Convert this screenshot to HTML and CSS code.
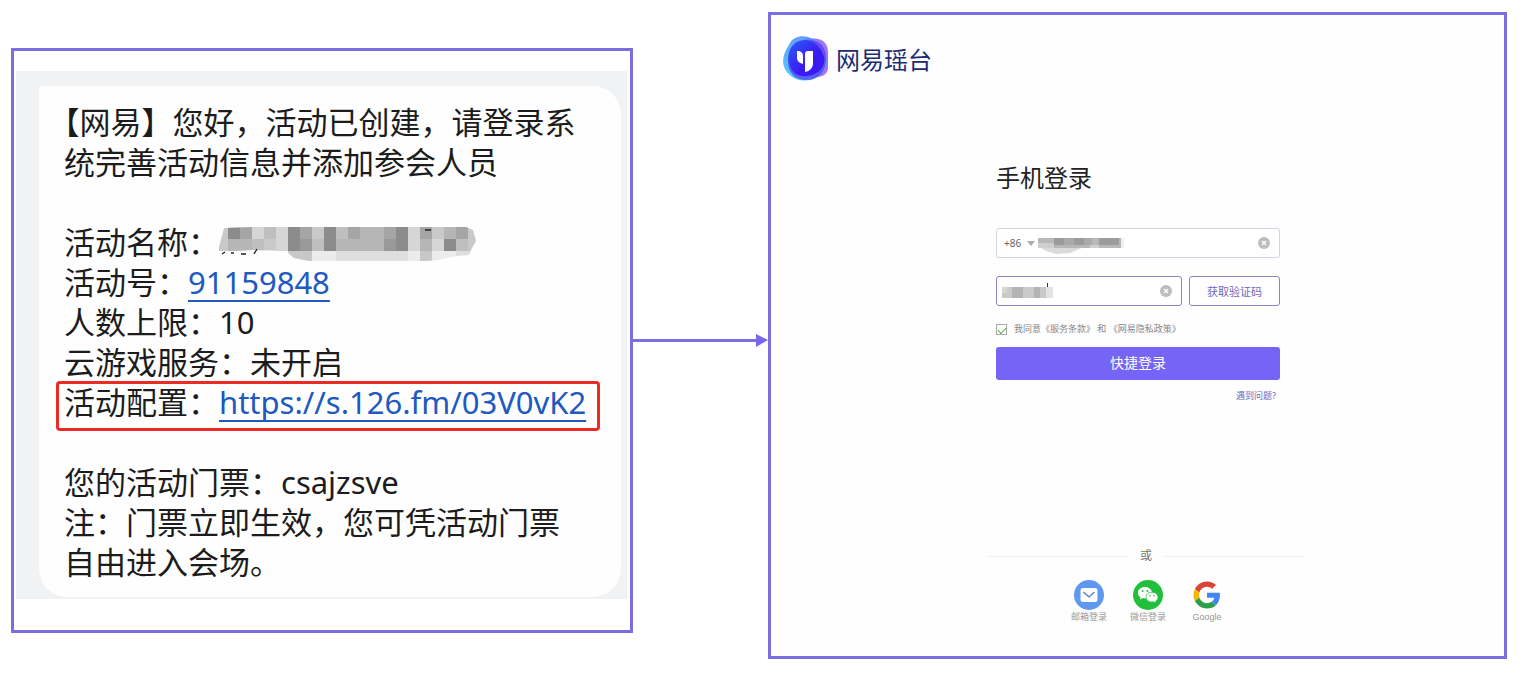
FILE: index.html
```html
<!DOCTYPE html>
<html lang="zh-CN">
<head>
<meta charset="utf-8">
<title>网易瑶台 手机登录</title>
<link rel="stylesheet" href="styles.css">
</head>
<body>
<main class="flow">
  <div class="source">
    <section class="panel sms-panel">
      <div class="sms-screen">
        <article class="bubble">
          <p>【网易】您好，活动已创建，请登录系<br>统完善活动信息并添加参会人员</p>
          <div class="details">
            <p class="with-mask">活动名称：
              <svg class="name-mask" width="257" height="40" viewBox="219 223 257 40" aria-hidden="true">
                <clipPath id="nm"><path d="M224 229l34-1h208l7 3 3 11-4 7-3 7-14 1-18 4-12 1H310l-16-3-8-7-34-1-20 1-14 2 1-6z"/></clipPath>
                <g clip-path="url(#nm)" shape-rendering="crispEdges">
                  <path fill="#c9c9c9" d="M216 227h260v25H216z"/>
                  <path fill="#dedede" d="M288 252h188v12H288z"/>
                  <path fill="#8c8c8c" d="M228 228h12v12h-12zM288 228h12v24h-12zM324 228h12v24h-12zM396 228h12v24h-12zM444 240h12v12h-12z"/>
                  <path fill="#a5a5a5" d="M240 228h12v12h-12zM300 228h12v12h-12zM348 228h12v12h-12zM384 228h12v12h-12zM420 228h12v12h-12zM456 228h12v12h-12z"/>
                  <path fill="#b6b6b6" d="M228 240h24v12h-24zM360 228h24v12h-24zM336 240h48v12h-48zM420 240h12v12h-12zM444 228h12v12h-12z"/>
                  <path fill="#999" d="M300 240h12v12h-12zM384 240h12v12h-12z"/>
                  <path fill="#bfbfbf" d="M252 240h12v12h-12zM264 228h12v12h-12zM336 228h12v12h-12zM312 240h12v12h-12zM456 240h12v12h-12z"/>
                  <path fill="#d6d6d6" d="M252 228h12v12h-12zM276 228h12v24h-12zM432 240h12v12h-12zM408 228h12v24h-12z"/>
                  <path fill="#ececec" d="M312 252h24v12h-24zM408 252h12v12h-12zM432 252h24v12h-24z"/>
                  <path fill="#c8c8c8" d="M288 252h24v12h-24zM420 252h12v12h-12z"/>
                </g>
                <path d="M222 255l3-2M231 254h3M241 255h5M254 255l3-5M425 231h6" stroke="#222" stroke-width="1.4" fill="none"/>
              </svg>
            </p>
            <p>活动号：<a href="#event">91159848</a></p>
            <p>人数上限：10</p>
            <p>云游戏服务：未开启</p>
            <p class="marked">活动配置：<a href="#config">https://s.126.fm/03V0vK2</a></p>
          </div>
          <p>您的活动门票：csajzsve<br>注：门票立即生效，您可凭活动门票<br>自由进入会场。</p>
        </article>
      </div>
    </section>
    <div class="arrow" aria-hidden="true">
      <span class="arrow-line"></span>
      <svg width="12" height="13" viewBox="0 0 12 13"><path d="M0 0l12 6-12 7z" fill="#7667ee"/></svg>
    </div>
  </div>

  <section class="panel login-panel">
    <header class="brand">
      <svg width="48" height="48" viewBox="0 0 48 48" aria-hidden="true">
        <defs>
          <linearGradient id="g1" x1="0" y1="0" x2="0" y2="1"><stop offset="0" stop-color="#4a8cf8"/><stop offset="1" stop-color="#2ec8fa"/></linearGradient>
          <linearGradient id="g2" x1="0" y1="0" x2="1" y2="1"><stop offset="0" stop-color="#6b70ff"/><stop offset="1" stop-color="#a64cf0"/></linearGradient>
          <linearGradient id="g3" x1="0" y1="0" x2="1" y2="1"><stop offset="0" stop-color="#2c5cf5"/><stop offset=".6" stop-color="#3a1af2"/></linearGradient>
        </defs>
        <path d="M22 4c12-2 24 0 24 13v16c-1 8-7 9-14 9L12 35z" fill="url(#g2)" opacity=".85"/>
        <path d="M8 8C12 0 25-1 32 5l11 14c4 9 0 17-6 22-8 6-21 6-28 0C-1 33 0 23 4 15z" fill="url(#g1)" opacity=".85"/>
        <path d="M26 5c13 0 18 8 18 18 0 14-7 22-20 22C13 45 6 38 6 26 6 13 14 5 26 5z" fill="#5a34f2" opacity=".7"/>
        <path d="M17 6c9-3 20 2 24 13 4 9-1 18-11 21-10 3-19 0-22-9C4 22 7 10 17 6z" fill="url(#g3)"/>
        <path d="M15 16c4 0 6 2 6 5v8c-4-1-6-3-6-6zM23 19c0-2 1-3 3-3h5v12c0 5-3 8-8 9z" fill="#fff"/>
      </svg>
      <span class="brand-name">网易瑶台</span>
    </header>

    <form class="login">
      <h1>手机登录</h1>
      <div class="field phone">
        <select aria-label="国家或地区代码"><option>+86</option></select>
        <svg class="caret" width="8" height="5" viewBox="0 0 8 5" aria-hidden="true"><path d="M0 0h8L4 5z" fill="#aaa"/></svg>
        <input type="tel" aria-label="手机号">
        <svg class="phone-mask" width="86" height="16" viewBox="0 0 86 16" aria-hidden="true">
          <path d="M2 9h44l-7 3-7 3-14 1-10-3z" fill="#dadada"/>
          <g shape-rendering="crispEdges"><path fill="#b8b8b8" d="M0 0h83v10H0z"/><path fill="#9b9b9b" d="M16 0h10v7H16zM36 0h10v7H36zM61 0h20v7H61z"/><path fill="#aaa" d="M26 0h10v7H26zM46 0h8v7h-8z"/><path fill="#cfcfcf" d="M0 5h16v5H0zM52 7h9v3h-9z"/><path fill="#efefef" d="M83 0h3v10h-3z"/></g>
        </svg>
        <button type="button" class="clear" aria-label="清除手机号"><svg width="12" height="12" viewBox="0 0 12 12"><circle cx="6" cy="6" r="6" fill="#bdbdbd"/><path d="M4 4l4 4M8 4L4 8" stroke="#fff" stroke-width="1.2"/></svg></button>
      </div>
      <div class="code-row">
        <div class="field code">
          <input type="text" aria-label="验证码">
          <svg class="code-mask" width="52" height="15" viewBox="0 0 52 15" aria-hidden="true">
            <g shape-rendering="crispEdges"><path fill="#c9c9c9" d="M0 4h44v11H0z"/><path fill="#b4b4b4" d="M10 4h11v11H10zM32 4h6v11h-6z"/><path fill="#d6d6d6" d="M0 4h5v6H0z"/><path fill="#e2e2e2" d="M44 4h7v11h-7z"/></g>
            <path d="M45.500 0v4" stroke="#333"/>
          </svg>
          <button type="button" class="clear" aria-label="清除验证码"><svg width="12" height="12" viewBox="0 0 12 12"><circle cx="6" cy="6" r="6" fill="#bdbdbd"/><path d="M4 4l4 4M8 4L4 8" stroke="#fff" stroke-width="1.2"/></svg></button>
        </div>
        <button type="button" class="get-code">获取验证码</button>
      </div>
      <div class="agree">
        <input type="checkbox" id="agree" checked>
        <label for="agree">我同意《服务条款》 和 《网易隐私政策》</label>
      </div>
      <button type="submit" class="submit">快捷登录</button>
      <a class="help" href="#help">遇到问题?</a>
    </form>

    <footer class="other">
      <div class="divider">或</div>
      <nav class="providers">
        <a href="#mail">
          <svg width="30" height="30" viewBox="0 0 30 30" aria-hidden="true"><circle cx="15" cy="15" r="15" fill="#5f98ef"/><rect x="6.500" y="8" width="17" height="14" rx="2.500" fill="#fff"/><path d="M9.500 12l5.500 5 5.500-5" fill="none" stroke="#4a78c4" stroke-width="1.200"/></svg>
          邮箱登录
        </a>
        <a href="#wechat">
          <svg width="30" height="30" viewBox="0 0 30 30" aria-hidden="true"><circle cx="15" cy="15" r="15" fill="#22bf3d"/><path d="M12 7c-4 0-7 2.500-7 5.800 0 2 1 3.500 2.600 4.500L7 19.500l2.700-1.400c.8.200 1.500.3 2.300.3 4 0 7-2.500 7-5.600C19 9.500 16 7 12 7z" fill="#fff"/><path d="M19 12.200c-3.400 0-6 2.200-6 5s2.600 4.900 6 4.900c.7 0 1.300-.1 1.900-.2l2.300 1.300-.6-2c1.500-1 2.400-2.400 2.400-4 0-2.800-2.600-5-6-5z" fill="#fff" stroke="#22bf3d" stroke-width=".8"/><g fill="#22bf3d"><circle cx="9.600" cy="11" r="1"/><circle cx="14.400" cy="11" r="1"/><circle cx="17" cy="15.800" r=".8"/><circle cx="21" cy="15.800" r=".8"/></g></svg>
          微信登录
        </a>
        <a href="#google">
          <svg width="30" height="30" viewBox="0 0 30 30" aria-hidden="true"><g transform="translate(1.500 1.500) scale(.5625)"><path fill="#db4437" d="M24 9.500c3.540 0 6.710 1.220 9.210 3.600l6.850-6.850C35.900 2.380 30.470 0 24 0 14.620 0 6.510 5.380 2.560 13.220l7.980 6.190C12.430 13.720 17.740 9.500 24 9.500z"/><path fill="#4285f4" d="M46.980 24.550c0-1.570-.15-3.090-.38-4.550H24v9.020h12.940c-.58 2.960-2.260 5.480-4.780 7.180l7.730 6c4.510-4.180 7.090-10.360 7.090-17.650z"/><path fill="#f4b400" d="M10.530 28.590a14.500 14.500 0 010-9.180l-7.980-6.190a24 24 0 000 21.560z"/><path fill="#2e9e48" d="M24 48c6.480 0 11.930-2.130 15.890-5.810l-7.730-6c-2.150 1.450-4.920 2.300-8.160 2.300-6.260 0-11.570-4.220-13.470-9.910l-7.980 6.190C6.510 42.620 14.620 48 24 48z"/></g></svg>
          Google
        </a>
      </nav>
    </footer>
  </section>
</main>
</body>
</html>
```

FILE: styles.css
```css
* { box-sizing: border-box; }
body {
  margin: 0;
  background: #fff;
  font-family: "Noto Sans", "Noto Sans CJK SC", sans-serif;
}
p, h1 { margin: 0; }
svg { display: block; }
button, input, select { font: inherit; }

.flow {
  display: grid;
  grid-template-columns: 757fr 739fr;
  align-items: start;
  padding: 12px 15px 20px 11px;
}
.source {
  display: grid;
  grid-template-columns: 622fr 135fr;
  align-items: center;
  margin-top: 36px;
}
.panel { border: 3px solid #7b6ee0; background: #fefefe; }

.sms-panel { padding: 20px 3px 31px 2px; background: #fff; }
.sms-screen { padding: 15px 6px 2px 23px; background: #f1f2f4; }
.bubble {
  display: flex;
  flex-direction: column;
  gap: 40px;
  padding: 16px 24px 15px 25px;
  border-radius: 3px 28px 28px 28px;
  background: #fefefe;
  color: #1c1c1c;
  font-size: 31px;
  line-height: 40px;
  white-space: nowrap;
  text-spacing-trim: trim-start;
}
.bubble a {
  color: #2059c0;
  text-decoration: underline;
  text-decoration-thickness: 2px;
  text-underline-offset: 6px;
  text-decoration-skip-ink: none;
}
.with-mask { display: flex; align-items: center; }
.marked { position: relative; }
.marked::after {
  content: "";
  position: absolute;
  inset: -1px -3px -9px -8px;
  border: 3px solid #ee2a24;
  border-radius: 4px;
  pointer-events: none;
}

.arrow { display: flex; align-items: center; }
.arrow-line { flex: 1; height: 3px; background: #7b6ee0; }

.login-panel { padding: 20px 10px 32px 11px; }
.brand { display: flex; align-items: center; gap: 6px; }
.brand-name { padding-top: 2px; color: #1b2c72; font-size: 24px; line-height: 36px; }

.login {
  display: flex;
  flex-direction: column;
  width: 284px;
  margin: 77px auto 0;
}
h1 { color: #222; font-size: 24px; line-height: 36px; font-weight: 400; }
.field {
  position: relative;
  display: flex;
  align-items: center;
  height: 30px;
  padding: 0 9px 0 7px;
  border: 1px solid #d2d3e0;
  border-radius: 3px;
  background: #fff;
}
.field input {
  flex: 1;
  min-width: 0;
  height: 28px;
  padding: 0 8px;
  border: 0;
  outline: 0;
  background: transparent;
  font-size: 10px;
}
.phone { margin-top: 32px; }
.phone select {
  width: 20px;
  padding: 0;
  border: 0;
  appearance: none;
  background: transparent;
  color: #666;
  font-size: 10px;
}
.caret { margin-left: 3px; }
.phone-mask { position: absolute; left: 41px; top: 9px; }
.code-mask { position: absolute; left: 5px; top: 6px; }
.clear { padding: 0; border: 0; background: none; }

.code-row { display: flex; gap: 7px; margin-top: 18px; }
.code { flex: 1; min-width: 0; border-color: #8a84c4; }
.get-code {
  flex: none;
  width: 91px;
  padding: 0;
  border: 1px solid #8a84c4;
  border-radius: 3px;
  background: #fff;
  color: #7068bc;
  font-size: 11px;
}
.agree { display: flex; align-items: center; gap: 7px; height: 16px; margin-top: 15px; }
.agree input {
  appearance: none;
  width: 11px;
  height: 11px;
  margin: 0;
  border: 1px solid #a5ada5;
  background: #fff;
}
.agree input:checked::before {
  content: "";
  display: block;
  width: 7px;
  height: 4px;
  margin: 2px 1px;
  border: solid #5aa845;
  border-width: 0 0 1px 1px;
  transform: rotate(-45deg);
}
.agree label { color: #888; font-size: 9px; line-height: 16px; white-space: nowrap; }
.submit {
  height: 33px;
  margin-top: 10px;
  padding: 0 0 3px;
  border: 0;
  border-radius: 3px;
  background: #7564f5;
  color: #fff;
  font-size: 14px;
}
.help {
  align-self: flex-end;
  margin: 8px 4px 0 0;
  color: #7068bc;
  font-size: 9px;
  line-height: 16px;
  text-decoration: none;
}

.other {
  display: flex;
  flex-direction: column;
  align-items: center;
  margin-top: 142px;
  padding-left: 16px;
}
.divider {
  display: flex;
  align-items: center;
  gap: 12px;
  width: 316px;
  color: #777;
  font-size: 12px;
  line-height: 20px;
}
.divider::before, .divider::after { content: ""; flex: 1; height: 1px; background: #f1f1f1; }
.providers {
  display: flex;
  justify-content: center;
  gap: 23px;
  margin-top: 14px;
  padding-left: 4px;
}
.providers a {
  display: flex;
  flex-direction: column;
  align-items: center;
  width: 36px;
  color: #999;
  font-family: "Liberation Sans", "Noto Sans CJK SC", sans-serif;
  font-size: 9px;
  line-height: 14px;
  text-decoration: none;
  white-space: nowrap;
}
```
